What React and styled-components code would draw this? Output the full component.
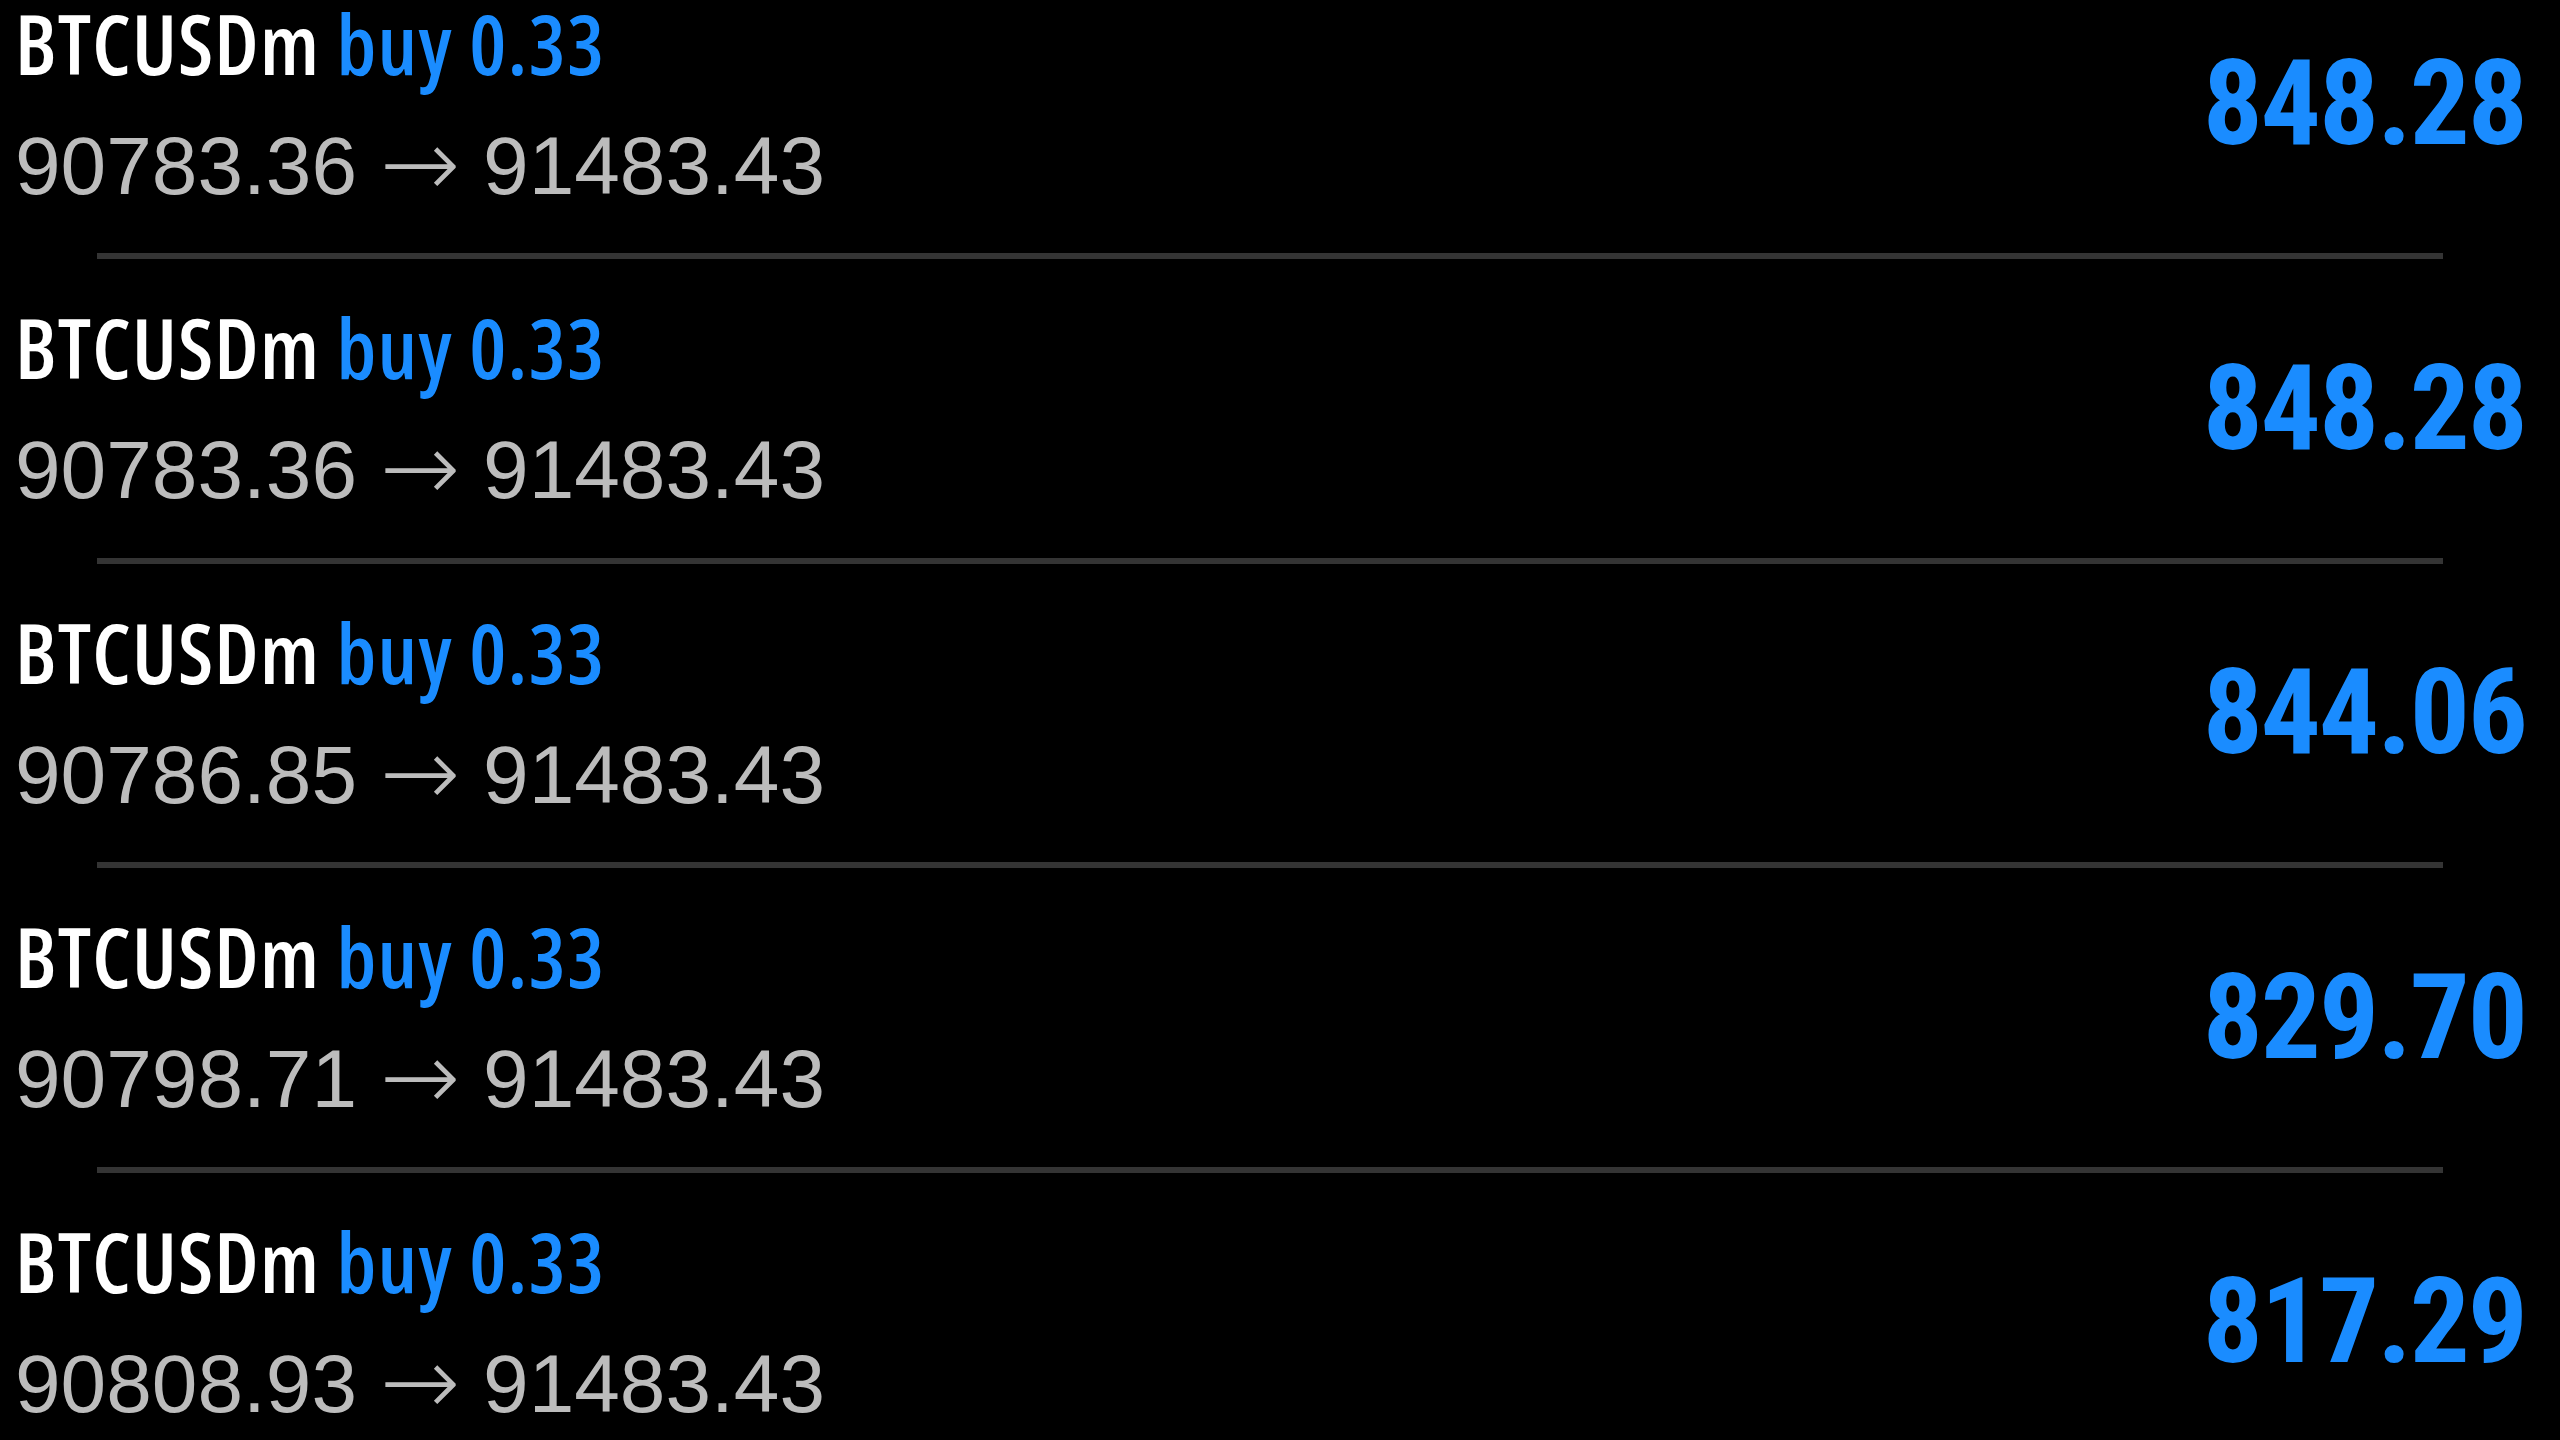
import React from "react";
import styled, { createGlobalStyle } from "styled-components";

const GlobalStyle = createGlobalStyle`
  html, body {
    margin: 0;
    padding: 0;
    background: #000;
    overflow: hidden;
  }
  body {
    width: 2560px;
    height: 1440px;
  }
`;

const Screen = styled.div`
  width: 2560px;
  height: 1440px;
  background: #000;
  overflow: hidden;
`;

const List = styled.div`
  display: flex;
  flex-direction: column;
  margin-top: -45.5px;
`;

const Row = styled.div`
  height: 298.5px;
  display: flex;
  justify-content: space-between;
  align-items: stretch;
  padding: 0 34px 0 15px;
  box-sizing: border-box;
`;

const Info = styled.div`
  display: flex;
  flex-direction: column;
  padding-top: 46px;
`;

const Title = styled.div`
  font-family: "Open Sans", Roboto, sans-serif;
  font-stretch: 75%;
  font-weight: 600;
  font-size: 83px;
  letter-spacing: 1.2px;
  line-height: 1;
  color: #ffffff;
  white-space: nowrap;
`;

const Accent = styled.span`
  color: #1a8cff;
`;

const Prices = styled.div`
  margin-top: 41px;
  font-family: "Liberation Sans", Arial, sans-serif;
  font-size: 82px;
  line-height: 1;
  color: #bcbcbc;
  white-space: nowrap;
`;

const Arrow = styled.span`
  font-family: "DejaVu Sans", sans-serif;
  font-weight: 200;
  font-size: 96px;
  line-height: 1px;
  vertical-align: -3px;
`;

const Profit = styled.div`
  align-self: center;
  font-family: "Liberation Sans Narrow", "Roboto Condensed", Roboto, sans-serif;
  font-weight: 700;
  font-size: 119px;
  letter-spacing: -2px;
  line-height: 1;
  color: #1a8cff;
  white-space: nowrap;
`;

const Divider = styled.div`
  height: 6px;
  margin: 0 117px 0 97px;
  background: #343434;
  flex-shrink: 0;
`;

const trades = [
  { open: "90783.36", close: "91483.43", profit: "848.28" },
  { open: "90783.36", close: "91483.43", profit: "848.28" },
  { open: "90786.85", close: "91483.43", profit: "844.06" },
  { open: "90798.71", close: "91483.43", profit: "829.70" },
  { open: "90808.93", close: "91483.43", profit: "817.29" },
];

export default function App() {
  return (
    <Screen>
      <GlobalStyle />
      <List>
        {trades.map((t, i) => (
          <React.Fragment key={i}>
            {i > 0 && <Divider />}
            <Row>
              <Info>
                <Title>
                  BTCUSDm <Accent>buy 0.33</Accent>
                </Title>
                <Prices>
                  {t.open} <Arrow>→</Arrow> {t.close}
                </Prices>
              </Info>
              <Profit>{t.profit}</Profit>
            </Row>
          </React.Fragment>
        ))}
      </List>
    </Screen>
  );
}
